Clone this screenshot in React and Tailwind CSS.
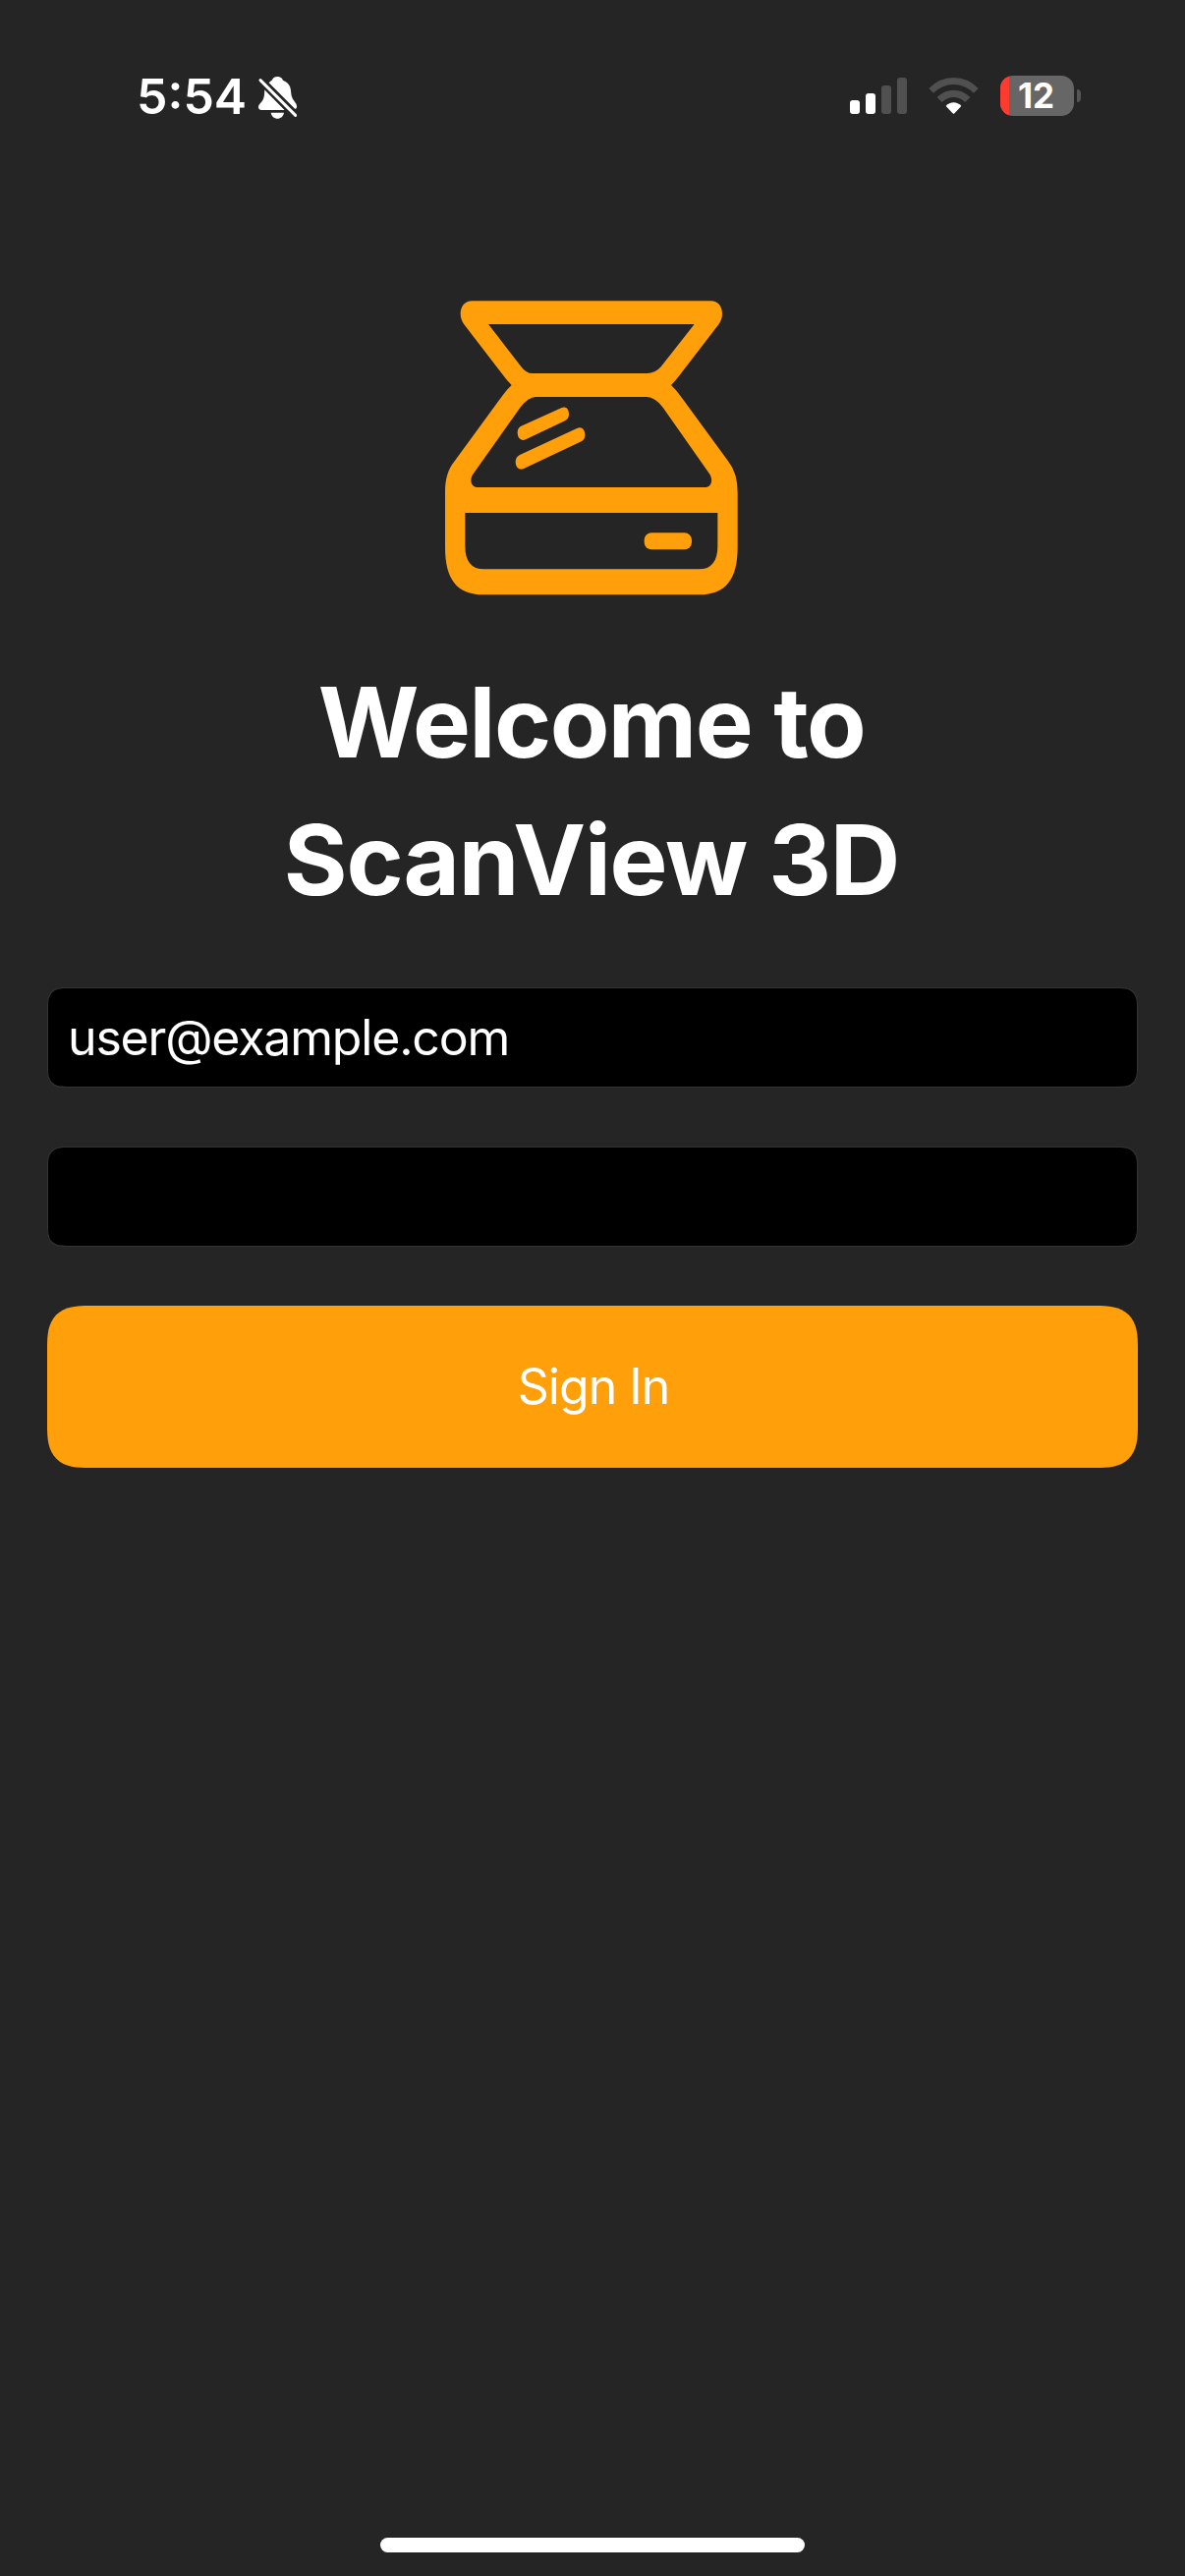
function SilentBell() {
  return (
    <svg className="mt-[17px] ml-[11px] h-[45px] w-[42px]" viewBox="425 48 126 135" fill="none">
      <path
        d="M486 51c-9 0-14 5-17 11-4 2-7 5-9 8l80 80c4-2 6-5 5-10-1-7-8-13-13-22-6-12-3-25-8-37-4-9-11-15-21-19-3-7-8-11-17-11z"
        fill="#fff"
      />
      <path d="M447 91l61 62h-71c-6 0-9-4-9-9 0-9 10-14 15-25 4-9 3-19 4-28z" fill="#fff" />
      <path d="M466 161h40c-2 11-10 18-20 18s-18-7-20-18z" fill="#fff" />
      <path d="M434 62L541 169" stroke="#252525" strokeWidth="22" />
      <path d="M434 62L541 169" stroke="#fff" strokeWidth="9" strokeLinecap="round" />
    </svg>
  );
}

function Signal() {
  return (
    <div className="mt-[19px] flex h-[37px] items-end gap-[6px]">
      <div className="h-[14px] w-[10px] rounded-[3px] bg-white" />
      <div className="h-[21px] w-[10px] rounded-[3px] bg-white" />
      <div className="h-[29px] w-[10px] rounded-[3px] bg-[#505050]" />
      <div className="h-[37px] w-[10px] rounded-[3px] bg-[#505050]" />
    </div>
  );
}

function Wifi() {
  return (
    <svg className="mt-[19px] ml-[22px] h-[37px] w-[51px]" viewBox="285 57 153 111">
      <path d="M286 90Q318 57 361.500 57T437 90L423 104Q396 78 361.500 78T300 104Z" fill="#505050" />
      <path d="M311 117Q334 95 361.500 95T412 117L397 132Q380 117 361.500 117T326 132Z" fill="#505050" />
      <path d="M338 144Q348 133 361.500 133T385 144L363 167Q361.500 168 360 167Z" fill="#fff" />
    </svg>
  );
}

function Battery() {
  return (
    <div className="mt-[17px] ml-[22px] flex h-[41px] items-center">
      <div className="flex h-[41px] w-[75px] items-center overflow-hidden rounded-[13px] bg-[#666666]">
        <div className="h-full w-[9px] bg-[#ff3b30]" />
        <span className="ml-[9px] text-[35px] leading-[41px] font-bold">12</span>
      </div>
      <div className="ml-[3px] h-[13px] w-[4px] rounded-r-full bg-[#555555]" />
    </div>
  );
}

function ScannerLogo() {
  return (
    <svg className="mt-px mr-[2px] h-[300px] w-[298px]" viewBox="39 47 894 900">
      <path
        fill="#ff9f0a"
        fillRule="evenodd"
        d="M122 48H850C873 48 885 65 885 87C885 99 881 110 874 120L757 272Q743 291 729 305Q744 319 757 337L904 538Q932 574 932 632V800C932 895 898 945 815 945H156C73 945 39 895 39 800V632C39 590 48 562 67 538L214 337Q227 319 242 305Q228 291 214 272L97 120C90 110 86 99 86 87C86 65 98 48 122 48Z
        M171 119L270 247Q286 269 306 269H655Q681 269 698 249L800 119Z
        M315 341Q295 341 270 371L125 576C112 594 118 617 140 617H831C853 617 858 594 846 576L704 373Q679 341 655 341Z
        M100 695V796C100 842 119 867 158 867H814C852 867 871 842 871 796V695Z"
      />
      <path
        fill="#ff9f0a"
        d="M271 430L395 374C409 368 418 380 417 396C416 405 412 410 405 414L285 471C270 477 260 466 260 450C260 440 264 433 271 430ZM267 518L443 436C457 430 466 442 466 457C466 467 462 473 455 477L279 560C264 566 254 555 254 539C254 529 259 522 267 518Z"
      />
      <rect x="647" y="756" width="145" height="51" rx="22" fill="#ff9f0a" />
    </svg>
  );
}

const fieldClass =
  "h-[102px] w-full rounded-[20px] border border-[#333333] bg-black px-[20px] text-[50px] tracking-[-1.18px] outline-none [corner-shape:superellipse(1.5)]";

export default function App() {
  return (
    <div className="flex h-[2622px] w-[1206px] flex-col bg-[#252525] font-[Inter,sans-serif] text-white">
      <header className="flex h-[305px] items-start pt-[60px] pr-[106px] pl-[139px]">
        <span className="mt-[8px] text-[50px] leading-[60px] font-semibold">5:54</span>
        <SilentBell />
        <div className="ml-auto flex items-start">
          <Signal />
          <Wifi />
          <Battery />
        </div>
      </header>
      <main className="flex flex-1 flex-col items-center px-[48px]">
        <ScannerLogo />
        <h1 className="mt-[59px] mr-[2px] flex flex-col items-center text-[99px] leading-[140px] font-bold">
          <span className="tracking-[-1.5px]">Welcome to</span>
          <span className="tracking-[-1.2px]">ScanView 3D</span>
        </h1>
        <form className="mt-[60px] flex w-full flex-col gap-[60px]">
          <input type="email" defaultValue="user@example.com" className={fieldClass} />
          <input type="password" className={fieldClass} />
          <button
            type="button"
            className="h-[165px] w-full rounded-[43px] bg-[#ff9f0a] pl-[2px] text-[50px] tracking-[-1px] [corner-shape:superellipse(1.5)]"
          >
            Sign In
          </button>
        </form>
      </main>
      <div className="mb-[24px] h-[15px] w-[432px] self-center rounded-full bg-white" />
    </div>
  );
}
